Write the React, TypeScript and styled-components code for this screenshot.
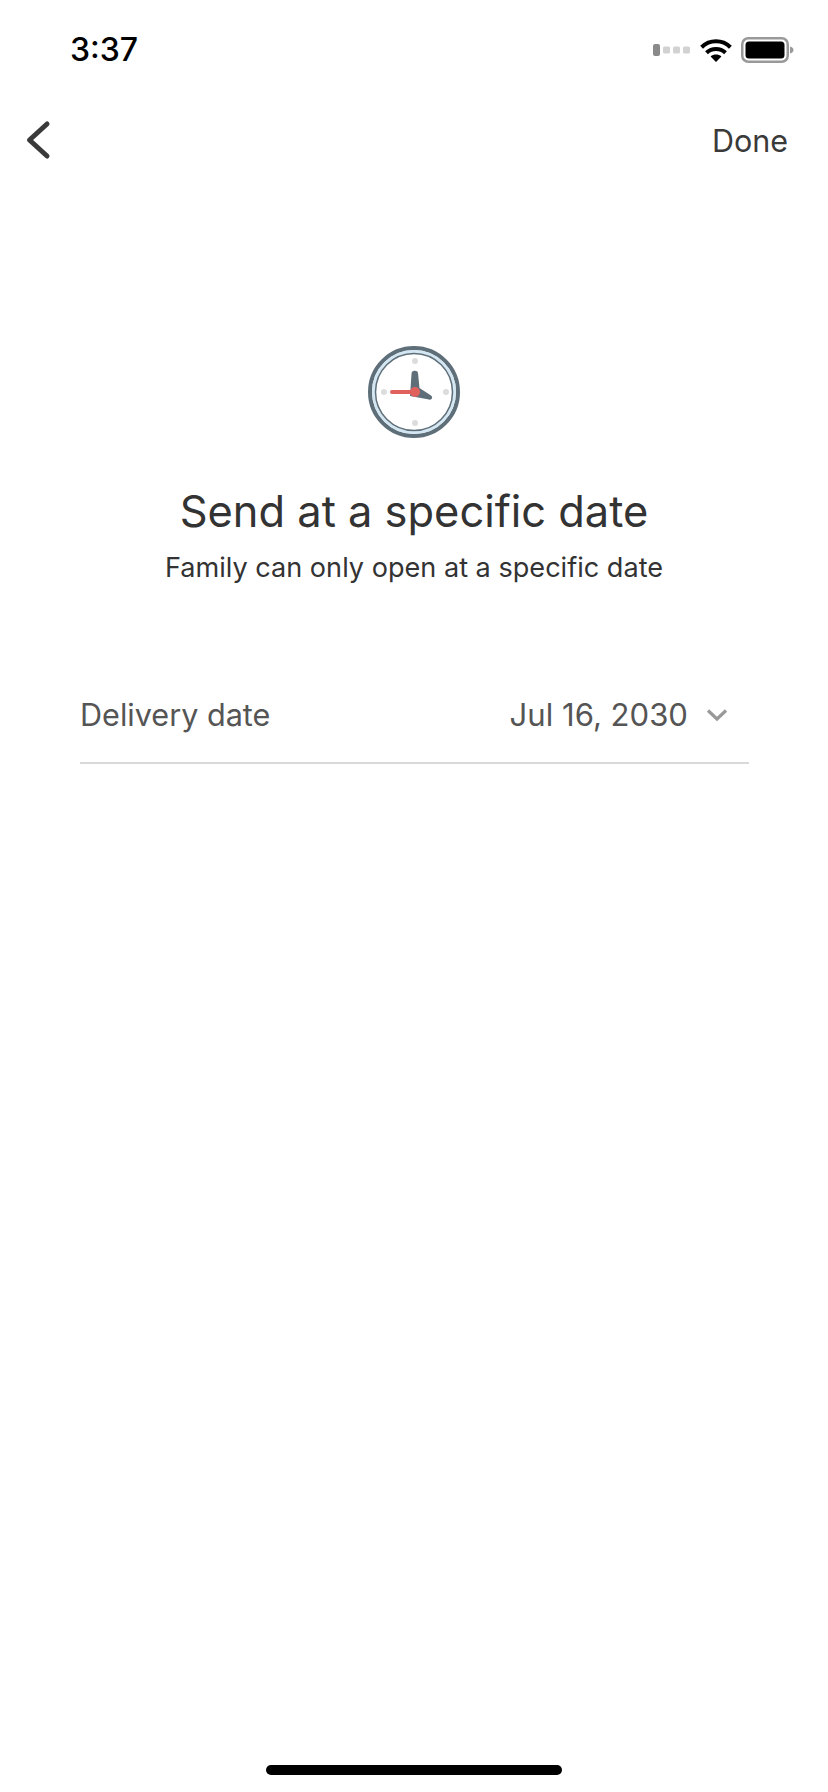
import React from 'react'
import styled, { createGlobalStyle } from 'styled-components'

const GlobalStyle = createGlobalStyle`
    html, body {
        margin: 0;
        padding: 0;
        background: #ffffff;
    }
`

const Screen = styled.div`
    box-sizing: border-box;
    width: 828px;
    height: 1792px;
    display: flex;
    flex-direction: column;
    background: #ffffff;
    font-family: Inter, "Liberation Sans", sans-serif;
    color: #333333;
    overflow: hidden;
`

const StatusBar = styled.div`
    box-sizing: border-box;
    height: 88px;
    padding: 11px 34px 0 70px;
    display: flex;
    align-items: center;
    justify-content: space-between;
`

const Clock = styled.span`
    font-size: 32px;
    font-weight: 500;
    color: #000000;
`

const StatusIcons = styled.div`
    display: flex;
    align-items: center;
    gap: 9px;
`

const NavBar = styled.div`
    box-sizing: border-box;
    height: 104px;
    padding: 0 40px 0 24px;
    display: flex;
    align-items: center;
    justify-content: space-between;
`

const DoneButton = styled.span`
    font-size: 30.5px;
    color: #3a3a3a;
`

const Hero = styled.div`
    display: flex;
    flex-direction: column;
    align-items: center;
    padding-top: 154px;
`

const Title = styled.h1`
    margin: 46px 0 0;
    font-size: 43.4px;
    line-height: 54px;
    font-weight: 400;
    color: #333333;
`

const Subtitle = styled.p`
    margin: 12px 0 0;
    font-size: 27.1px;
    line-height: 36px;
    color: #333333;
`

const DateRow = styled.div`
    box-sizing: border-box;
    margin: 87px 79px 0 80px;
    height: 91px;
    display: flex;
    align-items: center;
    justify-content: space-between;
    border-bottom: 2px solid #d9d9d9;
    padding: 0 21px 6px 0;
    font-size: 30.6px;
    color: #555555;
`

const DateValue = styled.div`
    display: flex;
    align-items: center;
    gap: 18px;
    font-size: 31.1px;
`

const Spacer = styled.div`
    flex: 1;
`

const HomeBar = styled.div`
    align-self: center;
    width: 296px;
    height: 10px;
    margin-bottom: 17px;
    border-radius: 5px;
    background: #000000;
`

const CellSignal = () => (
    <svg width="38" height="14" viewBox="0 0 38 14">
        <rect x="0" y="1" width="7" height="12" rx="2" fill="#8a8a8a" />
        <rect x="10" y="3.5" width="7" height="7" rx="1.5" fill="#d2d2d2" />
        <rect x="20" y="3.5" width="7" height="7" rx="1.5" fill="#d2d2d2" />
        <rect x="30" y="3.5" width="7" height="7" rx="1.5" fill="#d2d2d2" />
    </svg>
)

const Wifi = () => (
    <svg width="32" height="24" viewBox="0 0 32 24">
        <path d="M16 24l-5.4-5.6c3-2.6 7.800-2.600 10.800 0z" fill="#000" />
        <path d="M6.500 14.800C11.800 9.700 20.200 9.700 25.500 14.800" fill="none" stroke="#000" strokeWidth="4" />
        <path d="M1.600 9.200C9.700 1.300 22.300 1.300 30.400 9.200" fill="none" stroke="#000" strokeWidth="4" />
    </svg>
)

const Battery = () => (
    <svg width="53" height="26" viewBox="0 0 53 26">
        <rect x="1.250" y="1.250" width="45.500" height="23.500" rx="6" fill="none" stroke="#999" strokeWidth="2.500" />
        <rect x="4.500" y="4.500" width="39" height="17" rx="3.500" fill="#000" />
        <path d="M49 9.500c2 .4 3.500 1.800 3.500 3.500s-1.500 3.100-3.500 3.500z" fill="#999" />
    </svg>
)

const BackIcon = () => (
    <svg width="28" height="42" viewBox="0 0 28 42">
        <path d="M23 5L5.500 21L23 37" fill="none" stroke="#3a3a3a" strokeWidth="5" strokeLinecap="round" strokeLinejoin="round" />
    </svg>
)

const ClockIcon = () => (
    <svg width="92" height="92" viewBox="0 0 92 92">
        <circle cx="46" cy="46" r="44" fill="#ffffff" stroke="#5f6f7a" strokeWidth="4" />
        <circle cx="46" cy="46" r="40.500" fill="none" stroke="#d3e7f3" strokeWidth="3" />
        <circle cx="46" cy="46" r="38.500" fill="none" stroke="#5f6f7a" strokeWidth="1.500" />
        <circle cx="47" cy="15" r="3" fill="#dcdcdc" />
        <circle cx="47" cy="77" r="3" fill="#dcdcdc" />
        <circle cx="16" cy="46" r="3" fill="#dcdcdc" />
        <circle cx="78" cy="46" r="3" fill="#dcdcdc" />
        <path d="M43.500 28a3.300 3.300 0 0 1 6.600 0L51.500 42L63 49.500c2.500 1.800 .5 5-2 4L42 50z" fill="#5f6f7a" />
        <path d="M24 46h23" stroke="#e0605c" strokeWidth="4" strokeLinecap="round" />
        <circle cx="47" cy="46" r="5" fill="#e0605c" />
    </svg>
)

const ChevronDown = () => (
    <svg width="22" height="14" viewBox="0 0 22 14">
        <path d="M2 2.500L11 11L20 2.500" fill="none" stroke="#999999" strokeWidth="3.200" />
    </svg>
)

export default function App() {
    return (
        <Screen>
            <GlobalStyle />
            <StatusBar>
                <Clock>3:37</Clock>
                <StatusIcons>
                    <CellSignal />
                    <Wifi />
                    <Battery />
                </StatusIcons>
            </StatusBar>
            <NavBar>
                <BackIcon />
                <DoneButton>Done</DoneButton>
            </NavBar>
            <Hero>
                <ClockIcon />
                <Title>Send at a specific date</Title>
                <Subtitle>Family can only open at a specific date</Subtitle>
            </Hero>
            <DateRow>
                <span>Delivery date</span>
                <DateValue>
                    <span>Jul 16, 2030</span>
                    <ChevronDown />
                </DateValue>
            </DateRow>
            <Spacer />
            <HomeBar />
        </Screen>
    )
}
